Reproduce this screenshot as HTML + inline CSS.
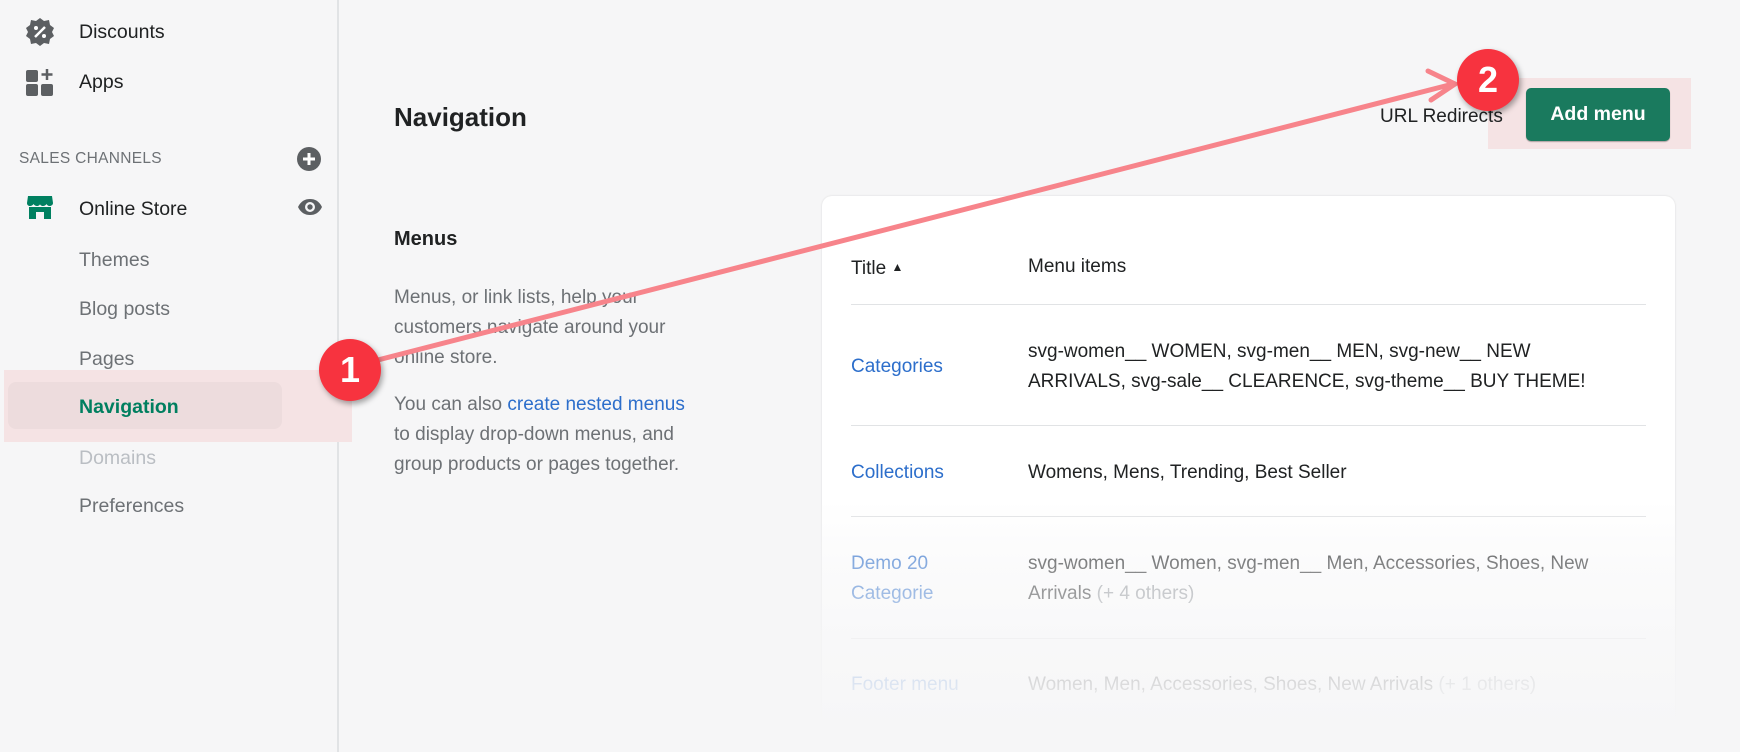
<!DOCTYPE html>
<html style="overflow:hidden;height:752px"><head><meta charset="utf-8"><style>
*{margin:0;padding:0;box-sizing:border-box}
body{width:1740px;height:752px;overflow:hidden;background:#f6f6f7;font-family:"Liberation Sans",sans-serif;position:relative;color:#202223}
.a{position:absolute;white-space:nowrap}
.side{position:absolute;left:0;top:0;width:339px;height:752px;background:#f6f6f7;border-right:2px solid #e1e3e5}
.si{font-size:19.5px;color:#202223;line-height:24px}
.sub{font-size:19.5px;color:#6d7175;line-height:24px}
.p{font-size:19px;color:#6d7175;line-height:30px}
.card{position:absolute;left:822px;top:196px;width:853px;height:556px;background:#fff;border-radius:10px 10px 0 0;box-shadow:0 0 2px rgba(0,0,0,.12)}
.fade{position:absolute;left:800px;top:500px;width:900px;height:252px;background:linear-gradient(to bottom,rgba(246,246,247,0),rgba(246,246,247,.45) 25%,rgba(246,246,247,.75) 55%,rgba(246,246,247,1) 92%)}
.hr{position:absolute;left:851px;width:795px;height:1px;background:#e1e3e5}
.t{font-size:19px;line-height:30px}
.lk{color:#2c6ecb}
.badge{position:absolute;width:62px;height:62px;border-radius:50%;background:#f7333f;color:#fff;font-weight:bold;font-size:36px;text-align:center;line-height:62px;box-shadow:2px 3px 6px rgba(0,0,0,.35)}
</style></head><body>
<div class="side"></div>
<svg class="a" style="left:25px;top:17px" width="30" height="30" viewBox="0 0 30 30"><path d="M15 1l4 3 5-1 1 5 4 3-2 4 2 4-4 3-1 5-5-1-4 3-4-3-5 1-1-5-4-3 2-4-2-4 4-3 1-5 5 1z" fill="#5c5f62"/><path d="M10 20L20 10" stroke="#fff" stroke-width="2.5"/><circle cx="11" cy="11" r="2" fill="#fff"/><circle cx="19" cy="19" r="2" fill="#fff"/></svg>
<div class="a si" style="left:79px;top:20px">Discounts</div>
<svg class="a" style="left:26px;top:68px" width="28" height="28" viewBox="0 0 28 28"><rect x="0" y="2" width="12" height="12" rx="2" fill="#5c5f62"/><rect x="0" y="16" width="12" height="12" rx="2" fill="#5c5f62"/><rect x="15" y="16" width="12" height="12" rx="2" fill="#5c5f62"/><path d="M21 1v11M15.5 6.5h11" stroke="#5c5f62" stroke-width="2.5"/></svg>
<div class="a si" style="left:79px;top:70px">Apps</div>
<div class="a" style="left:19px;top:150px;font-size:15.5px;color:#6d7175;letter-spacing:.3px">SALES CHANNELS</div>
<svg class="a" style="left:297px;top:147px" width="24" height="24" viewBox="0 0 24 24"><circle cx="12" cy="12" r="12" fill="#5c5f62"/><path d="M12 6v12M6 12h12" stroke="#fff" stroke-width="3"/></svg>
<svg class="a" style="left:26px;top:193px" width="28" height="28" viewBox="0 0 28 28"><path d="M2 3h24l1 7c0 2-2 3-3.5 3S21 12 20.5 11c-.5 1-2 2-3.5 2s-3-1-3-2c0 1-1.5 2-3 2s-3-1-3.5-2C7 12 5.5 13 4 13S1 12 1 10z" fill="#008060"/><path d="M3 14v12h7v-7h8v7h7V14" fill="#008060"/></svg>
<div class="a si" style="left:79px;top:197px">Online Store</div>
<svg class="a" style="left:297px;top:198px" width="26" height="18" viewBox="0 0 26 18"><path d="M1 9C4 3 8 1 13 1s9 2 12 8c-3 6-7 8-12 8S4 15 1 9z" fill="#5c5f62"/><circle cx="13" cy="9" r="5" fill="#f6f6f7"/><circle cx="13" cy="9" r="2.7" fill="#5c5f62"/></svg>
<div class="a sub" style="left:79px;top:248px">Themes</div>
<div class="a sub" style="left:79px;top:297px">Blog posts</div>
<div class="a sub" style="left:79px;top:347px">Pages</div>
<div class="a" style="left:4px;top:370px;width:348px;height:72px;background:#f5e3e4"></div>
<div class="a" style="left:8px;top:382px;width:274px;height:47px;background:#eddcdd;border-radius:8px"></div>
<div class="a" style="left:79px;top:396px;font-size:19.5px;color:#007f5f;font-weight:bold">Navigation</div>
<div class="a sub" style="left:79px;top:446px;color:#babec3">Domains</div>
<div class="a sub" style="left:79px;top:494px">Preferences</div>

<div class="a" style="left:394px;top:102px;font-size:26px;font-weight:bold;color:#202223">Navigation</div>
<div class="a" style="left:1488px;top:78px;width:203px;height:71px;background:#f5e3e4"></div>
<div class="a" style="left:1380px;top:106px;font-size:19px">URL Redirects</div>
<div class="a" style="left:1526px;top:88px;width:144px;height:53px;background:#1a7a5e;border-radius:5px;color:#fff;font-size:19.5px;font-weight:bold;text-align:center;line-height:53px;box-shadow:0 1px 1px rgba(0,0,0,.3)">Add menu</div>

<div class="a" style="left:394px;top:228px;font-size:20px;font-weight:bold">Menus</div>
<div class="a p" style="left:394px;top:283px">Menus, or link lists, help your<br>customers navigate around your<br>online store.</div>
<div class="a p" style="left:394px;top:390px">You can also <span class="lk">create nested menus</span><br>to display drop-down menus, and<br>group products or pages together.</div>

<div class="card"></div>
<div class="a t" style="left:851px;top:252px">Title <span style="font-size:12px;vertical-align:3px">▲</span></div>
<div class="a t" style="left:1028px;top:252px">Menu items</div>
<div class="hr" style="top:304px"></div>
<div class="a t lk" style="left:851px;top:352px">Categories</div>
<div class="a t" style="left:1028px;top:337px">svg-women__ WOMEN, svg-men__ MEN, svg-new__ NEW<br>ARRIVALS, svg-sale__ CLEARENCE, svg-theme__ BUY THEME!</div>
<div class="hr" style="top:425px"></div>
<div class="a t lk" style="left:851px;top:458px">Collections</div>
<div class="a t" style="left:1028px;top:458px">Womens, Mens, Trending, Best Seller</div>
<div class="hr" style="top:516px"></div>
<div class="a t lk" style="left:851px;top:549px">Demo 20<br>Categorie</div>
<div class="a t" style="left:1028px;top:549px">svg-women__ Women, svg-men__ Men, Accessories, Shoes, New<br>Arrivals <span style="color:#8c9196">(+ 4 others)</span></div>
<div class="hr" style="top:638px"></div>
<div class="a t lk" style="left:851px;top:670px">Footer menu</div>
<div class="a t" style="left:1028px;top:670px">Women, Men, Accessories, Shoes, New Arrivals <span style="color:#8c9196">(+ 1 others)</span></div>
<div class="hr" style="top:728px"></div>
<div class="fade"></div>

<svg class="a" style="left:0;top:0" width="1740" height="752"><g stroke="#f7848b" stroke-width="5" stroke-linecap="round" fill="none"><path d="M370 362L1453 84"/><path d="M1428 71L1455 84L1431 100"/></g></svg>
<div class="badge" style="left:319px;top:339px">1</div>
<div class="badge" style="left:1457px;top:49px">2</div>
</body></html>
